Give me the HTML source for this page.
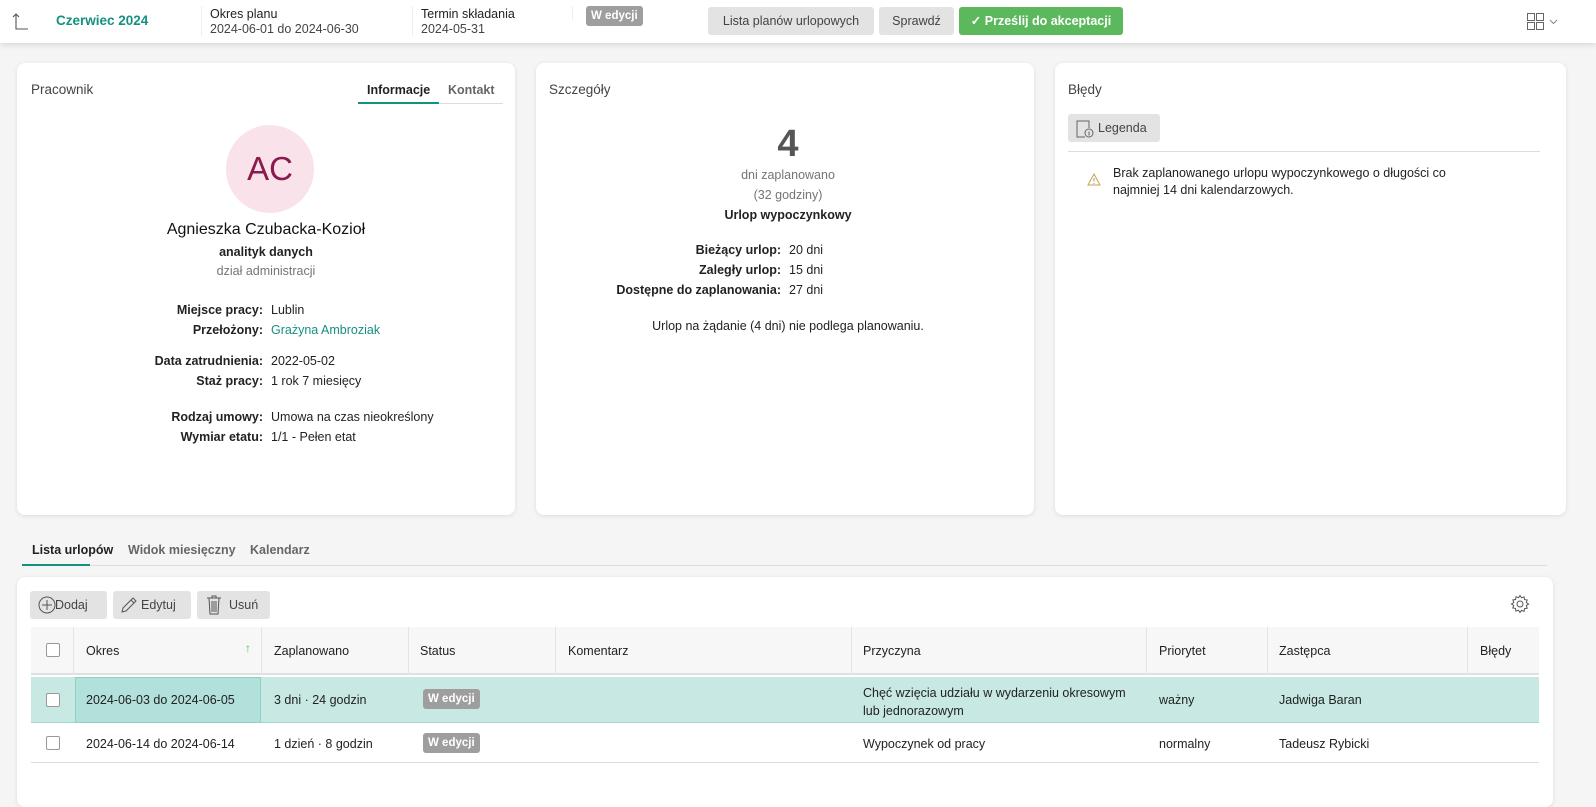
<!DOCTYPE html>
<html><head><meta charset="utf-8"><style>
*{box-sizing:border-box;margin:0;padding:0}
body{width:1596px;height:792px;overflow:hidden;background:#f5f5f5;font-family:"Liberation Sans",sans-serif;font-size:12.5px;color:#222;position:relative}
.a{position:absolute;white-space:nowrap}
.top{position:absolute;left:0;top:0;width:1596px;height:43px;background:#fff;box-shadow:0 2px 6px rgba(0,0,0,.12)}
.card{position:absolute;background:#fff;border-radius:8px;box-shadow:0 1px 5px rgba(0,0,0,.1)}
.btn{position:absolute;background:#e3e3e3;border-radius:3px;height:28px;line-height:28px;color:#444;text-align:center;font-size:12.5px}
.badge{position:absolute;background:#9e9e9e;color:#fff;border-radius:3px;font-size:11.5px;font-weight:bold;padding:0 5px;height:20px;line-height:20px}
.r{text-align:right}
.b{font-weight:bold}
.grey{color:#757575}
.teal{color:#16907f}
.cb{position:absolute;width:14px;height:14px;border:1px solid #999;border-radius:2px;background:#fff}
.vl{position:absolute;width:1px;background:#e4e4e4}
</style></head><body>
<div class="top">
<svg class="a" style="left:12px;top:12px" width="18" height="20" viewBox="0 0 18 20"><path d="M4 2v15h12M1 5l3-3 3 3" fill="none" stroke="#555" stroke-width="1.1"/></svg>
<div class="a teal b" style="left:56px;top:13px;font-size:13.5px">Czerwiec 2024</div>
<div class="vl" style="left:201px;top:6px;height:30px;background:#eee"></div>
<div class="a" style="left:210px;top:7px">Okres planu</div>
<div class="a" style="left:210px;top:22px;color:#444">2024-06-01 do 2024-06-30</div>
<div class="vl" style="left:412px;top:6px;height:30px;background:#eee"></div>
<div class="a" style="left:421px;top:7px">Termin składania</div>
<div class="a" style="left:421px;top:22px;color:#444">2024-05-31</div>
<div class="vl" style="left:572px;top:6px;height:14px;background:#eee"></div>
<div class="badge" style="left:586px;top:6px">W edycji</div>
<div class="btn" style="left:708px;top:7px;width:166px">Lista planów urlopowych</div>
<div class="btn" style="left:879px;top:7px;width:75px">Sprawdź</div>
<div class="btn" style="left:959px;top:7px;width:164px;background:#5cb85c;color:#fff;font-weight:bold">✓ Prześlij do akceptacji</div>
<svg class="a" style="left:1527px;top:13px" width="32" height="18" viewBox="0 0 32 18"><rect x="0.5" y="0.5" width="7" height="7" fill="none" stroke="#666"/><rect x="9.5" y="0.5" width="7" height="7" fill="none" stroke="#666"/><rect x="0.5" y="9.5" width="7" height="7" fill="none" stroke="#666"/><rect x="9.5" y="9.5" width="7" height="7" fill="none" stroke="#666"/><path d="M23 7l3.5 3.5L30 7" fill="none" stroke="#888"/></svg>
</div>

<div class="card" style="left:17px;top:63px;width:498px;height:452px">
<div class="a" style="left:14px;top:19px;font-size:13.5px;color:#444">Pracownik</div>
<div class="a b" style="left:350px;top:20px">Informacje</div>
<div class="a b" style="left:431px;top:20px;color:#666">Kontakt</div>
<div class="a" style="left:341px;top:40px;width:145px;height:1px;background:#ddd"></div>
<div class="a" style="left:341px;top:39px;width:81px;height:2px;background:#16907f"></div>
<div class="a" style="left:209px;top:62px;width:88px;height:88px;border-radius:50%;background:#f9e2ea;color:#8b1a4e;font-size:33px;text-align:center;line-height:88px">AC</div>
<div class="a" style="left:0;width:498px;top:158px;text-align:center;font-size:16px;color:#111">Agnieszka Czubacka-Kozioł</div>
<div class="a b" style="left:0;width:498px;top:182px;text-align:center">analityk danych</div>
<div class="a grey" style="left:0;width:498px;top:201px;text-align:center">dział administracji</div>
<div class="a r b" style="left:0;width:246px;top:237px;line-height:20px">Miejsce pracy:<br>Przełożony:</div>
<div class="a" style="left:254px;top:237px;line-height:20px">Lublin<br><span class="teal">Grażyna Ambroziak</span></div>
<div class="a r b" style="left:0;width:246px;top:288px;line-height:20px">Data zatrudnienia:<br>Staż pracy:</div>
<div class="a" style="left:254px;top:288px;line-height:20px">2022-05-02<br>1 rok 7 miesięcy</div>
<div class="a r b" style="left:0;width:246px;top:344px;line-height:20px">Rodzaj umowy:<br>Wymiar etatu:</div>
<div class="a" style="left:254px;top:344px;line-height:20px">Umowa na czas nieokreślony<br>1/1 - Pełen etat</div>
</div>

<div class="card" style="left:536px;top:63px;width:498px;height:452px">
<div class="a" style="left:13px;top:19px;font-size:13.5px;color:#444">Szczegóły</div>
<div class="a b" style="left:0;width:504px;top:60px;text-align:center;font-size:38px;color:#555">4</div>
<div class="a grey" style="left:0;width:504px;top:105px;text-align:center">dni zaplanowano</div>
<div class="a grey" style="left:0;width:504px;top:125px;text-align:center">(32 godziny)</div>
<div class="a b" style="left:0;width:504px;top:145px;text-align:center">Urlop wypoczynkowy</div>
<div class="a r b" style="left:0;width:245px;top:177px;line-height:20px">Bieżący urlop:<br>Zaległy urlop:<br>Dostępne do zaplanowania:</div>
<div class="a" style="left:253px;top:177px;line-height:20px">20 dni<br>15 dni<br>27 dni</div>
<div class="a" style="left:0;width:504px;top:256px;text-align:center">Urlop na żądanie (4 dni) nie podlega planowaniu.</div>
</div>

<div class="card" style="left:1055px;top:63px;width:511px;height:452px">
<div class="a" style="left:13px;top:19px;font-size:13.5px;color:#444">Błędy</div>
<div class="btn" style="left:13px;top:51px;width:92px;text-align:left;padding-left:30px">Legenda</div>
<svg class="a" style="left:21px;top:57px" width="22" height="18" viewBox="0 0 22 18"><path d="M9 17H1V1h12v7" fill="none" stroke="#666"/><circle cx="13" cy="13" r="4" fill="#e3e3e3" stroke="#666"/><path d="M13 11.5v4" stroke="#666"/></svg>
<div class="a" style="left:13px;top:88px;width:472px;height:1px;background:#ddd"></div>
<svg class="a" style="left:32px;top:110px" width="14" height="13" viewBox="0 0 14 13"><path d="M7 1L13 12H1Z" fill="none" stroke="#c9a24a"/><path d="M7 5v3.5M7 10v1" stroke="#999"/></svg>
<div class="a" style="left:58px;top:102px;line-height:17px">Brak zaplanowanego urlopu wypoczynkowego o długości co<br>najmniej 14 dni kalendarzowych.</div>
</div>

<div class="a b" style="left:32px;top:543px;color:#222">Lista urlopów</div>
<div class="a b" style="left:128px;top:543px;color:#666">Widok miesięczny</div>
<div class="a b" style="left:250px;top:543px;color:#666">Kalendarz</div>
<div class="a" style="left:22px;top:565px;width:1525px;height:1px;background:#ddd"></div>
<div class="a" style="left:22px;top:564px;width:68px;height:2px;background:#16907f"></div>

<div class="card" style="left:17px;top:577px;width:1536px;height:230px">
<div class="btn" style="left:13px;top:14px;width:77px;text-align:left;padding-left:25px">Dodaj</div>
<svg class="a" style="left:21px;top:19px" width="18" height="18"><circle cx="9" cy="9" r="8" fill="none" stroke="#555"/><path d="M9 4v10M4 9h10" stroke="#555"/></svg>
<div class="btn" style="left:96px;top:14px;width:50px;text-align:left;padding-left:28px;width:78px">Edytuj</div>
<svg class="a" style="left:103px;top:19px" width="18" height="18"><path d="M2 16l1-4L13 2l3 3L6 15zM11 4l3 3" fill="none" stroke="#555"/></svg>
<div class="btn" style="left:180px;top:14px;width:73px;text-align:left;padding-left:32px">Usuń</div>
<svg class="a" style="left:189px;top:18px" width="16" height="20"><path d="M1 3h14M6 3V1h4v2M3 3l1 16h8l1-16M6 6v11M8 6v11M10 6v11" fill="none" stroke="#555"/></svg>
<svg class="a" style="left:1493px;top:17px" width="20" height="20" viewBox="0 0 20 20"><circle cx="10" cy="10" r="3" fill="none" stroke="#555"/><path d="M10 1.5l1.5 2.3 2.6-.9.4 2.7 2.7.4-.9 2.6 2.3 1.5-2.3 1.5.9 2.6-2.7.4-.4 2.7-2.6-.9L10 18.5l-1.5-2.3-2.6.9-.4-2.7-2.7-.4.9-2.6L1.5 10l2.3-1.5-.9-2.6 2.7-.4.4-2.7 2.6.9z" fill="none" stroke="#555"/></svg>

<div class="a" style="left:14px;top:50px;width:1508px;height:48px;background:#f7f7f7;border-bottom:2px solid #e0e0e0"></div>
<div class="vl" style="left:56px;top:50px;height:48px"></div>
<div class="vl" style="left:244px;top:50px;height:48px"></div>
<div class="vl" style="left:391px;top:50px;height:48px"></div>
<div class="vl" style="left:538px;top:50px;height:48px"></div>
<div class="vl" style="left:834px;top:50px;height:48px"></div>
<div class="vl" style="left:1129px;top:50px;height:48px"></div>
<div class="vl" style="left:1250px;top:50px;height:48px"></div>
<div class="vl" style="left:1450px;top:50px;height:48px"></div>
<div class="cb" style="left:29px;top:66px"></div>
<div class="a b" style="left:69px;top:67px;font-weight:normal;color:#222">Okres</div>
<div class="a" style="left:228px;top:64px;color:#5cb85c;font-size:12px">↑</div>
<div class="a" style="left:257px;top:67px">Zaplanowano</div>
<div class="a" style="left:403px;top:67px">Status</div>
<div class="a" style="left:551px;top:67px">Komentarz</div>
<div class="a" style="left:846px;top:67px">Przyczyna</div>
<div class="a" style="left:1142px;top:67px">Priorytet</div>
<div class="a" style="left:1262px;top:67px">Zastępca</div>
<div class="a" style="left:1463px;top:67px">Błędy</div>

<div class="a" style="left:14px;top:100px;width:1508px;height:46px;background:#c8e9e3;border-bottom:1px solid #9fd8cd"></div>
<div class="a" style="left:58px;top:100px;width:186px;height:46px;background:#b2e0da;border:1px solid #8fd0c4"></div>
<div class="cb" style="left:29px;top:116px"></div>
<div class="a" style="left:69px;top:116px">2024-06-03 do 2024-06-05</div>
<div class="a" style="left:257px;top:116px">3 dni · 24 godzin</div>
<div class="badge" style="left:406px;top:112px">W edycji</div>
<div class="a" style="left:846px;top:107px;line-height:18px">Chęć wzięcia udziału w wydarzeniu okresowym<br>lub jednorazowym</div>
<div class="a" style="left:1142px;top:116px">ważny</div>
<div class="a" style="left:1262px;top:116px">Jadwiga Baran</div>

<div class="cb" style="left:29px;top:159px"></div>
<div class="a" style="left:69px;top:160px">2024-06-14 do 2024-06-14</div>
<div class="a" style="left:257px;top:160px">1 dzień · 8 godzin</div>
<div class="badge" style="left:406px;top:156px">W edycji</div>
<div class="a" style="left:846px;top:160px">Wypoczynek od pracy</div>
<div class="a" style="left:1142px;top:160px">normalny</div>
<div class="a" style="left:1262px;top:160px">Tadeusz Rybicki</div>
<div class="a" style="left:14px;top:185px;width:1508px;height:1px;background:#ddd"></div>
</div>
</body></html>
